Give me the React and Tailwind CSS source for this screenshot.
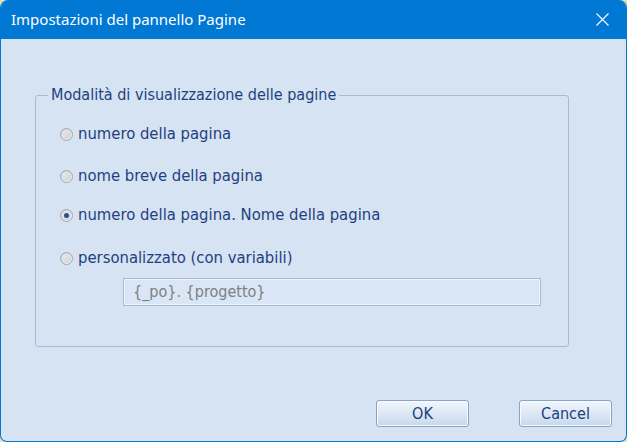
import React from "react";

const FONT = { fontFamily: '"DejaVu Sans Condensed", "Liberation Sans", Arial, sans-serif' };

function Radio({ checked }) {
  return (
    <span className="relative flex h-[13px] w-[13px] shrink-0 items-center justify-center rounded-full border border-[#a3a9b1] bg-gradient-to-br from-[#c9ccd1] to-[#f4f5f7]">
      <span className="h-[9px] w-[9px] rounded-full bg-gradient-to-br from-[#e9eaec] to-[#d0d3d8] flex items-center justify-center">
        {checked && <span className="h-[5px] w-[5px] rounded-full bg-[#2a4f8f]" />}
      </span>
    </span>
  );
}

function Option({ label, checked, className = "" }) {
  return (
    <label className={"flex items-center gap-[5px] text-[16.5px] leading-[20px] text-[#1f3f80] " + className}>
      <Radio checked={checked} />
      <span>{label}</span>
    </label>
  );
}

function DlgButton({ children }) {
  return (
    <button className="h-[27px] w-[93px] rounded-[3px] border border-[#8aa3c4] bg-gradient-to-b from-[#f1f6fc] via-[#dde8f5] to-[#c6d8ee] text-[16px] text-[#213f7b] shadow-[inset_0_0_0_1px_#f7fbff]">
      {children}
    </button>
  );
}

export default function App() {
  return (
    <div className="h-[442px] w-[627px] bg-[#e7dfb5]" style={FONT}>
      <div className="flex h-full w-full flex-col overflow-hidden rounded-t-[8px] rounded-b-[7px] border border-t-0 border-[#0078d4] bg-[#d5e3f3]">
        {/* title bar */}
        <div className="flex h-[39px] shrink-0 items-center justify-between bg-[#0078d4] pl-[10px] pr-[17px]">
          <span className="text-[15px] text-white" style={{ fontFamily: '"Noto Sans", "Open Sans", sans-serif' }}>
            Impostazioni del pannello Pagine
          </span>
          <svg width="13" height="13" viewBox="0 0 13 13" fill="none" stroke="white" strokeWidth="1.1">
            <path d="M0.5 0.5 L12.5 12.5 M12.5 0.5 L0.5 12.5" />
          </svg>
        </div>

        {/* body */}
        <div className="flex flex-1 flex-col pl-[34px] pt-[46px]">
          <fieldset className="h-[262px] w-[534px] rounded-[3px] border border-[#a7bbd6] pt-[19px]">
            <legend className="ml-[12px] px-[3px] text-[16px] leading-[20px] text-[#1f3f80]">
              Modalità di visualizzazione delle pagine
            </legend>
            <div className="flex flex-col pl-[24px]">
              <Option label="numero della pagina" />
              <Option label="nome breve della pagina" className="mt-[22px]" />
              <Option label="numero della pagina. Nome della pagina" checked className="mt-[19px]" />
              <Option label="personalizzato (con variabili)" className="mt-[23px]" />
              <div className="ml-[63px] mt-[10px] flex h-[28px] w-[418px] items-center border border-[#b2b9c4] bg-[#d9e6f5] pl-[9px] text-[16px] text-[#7f7f7f] shadow-[inset_0_0_0_1px_#eef4fb]">
                {"{_po}. {progetto}"}
              </div>
            </div>
          </fieldset>

          <div className="mt-[53px] flex justify-end gap-[50px] pr-[14px]">
            <DlgButton>OK</DlgButton>
            <DlgButton>Cancel</DlgButton>
          </div>
        </div>
      </div>
    </div>
  );
}
